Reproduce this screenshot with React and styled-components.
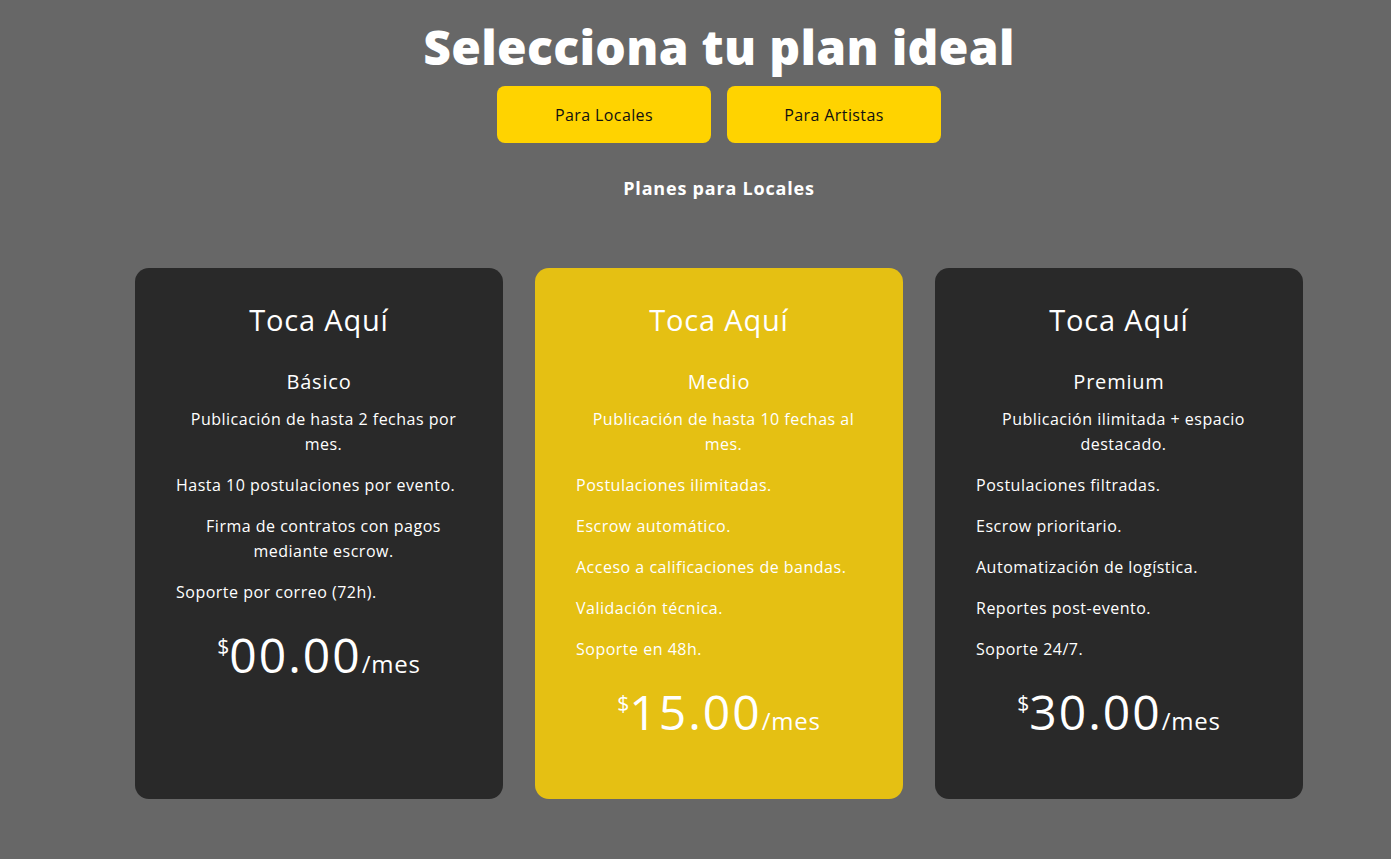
import styled, { createGlobalStyle } from 'styled-components';

const GlobalStyle = createGlobalStyle`
  * {
    box-sizing: border-box;
  }
  body {
    margin: 0;
    background-color: #676767;
    font-family: 'Open Sans', 'DejaVu Sans', sans-serif;
  }
`;

const Page = styled.main`
  min-height: 100vh;
  padding-left: 47px;
  display: flex;
  flex-direction: column;
  align-items: center;
  color: #fff;
`;

const Title = styled.h1`
  margin: 11px 0 0;
  font-size: 48px;
  font-weight: 800;
  line-height: 72px;
  letter-spacing: 0.3px;
`;

const Switcher = styled.div`
  display: flex;
  gap: 16px;
  margin-top: 3px;
`;

const TabButton = styled.button`
  width: 214px;
  height: 57px;
  border: none;
  border-radius: 8px;
  background-color: #ffd300;
  color: #111;
  font-family: inherit;
  font-size: 16px;
  letter-spacing: 0.4px;
  cursor: pointer;
`;

const Subtitle = styled.h2`
  margin: 32px 0 0;
  font-size: 18px;
  font-weight: 700;
  line-height: 27px;
  letter-spacing: 0.8px;
`;

const Cards = styled.div`
  display: grid;
  grid-template-columns: repeat(3, 368px);
  gap: 32px;
  margin-top: 66px;
`;

const Card = styled.section`
  background-color: ${({ $featured }) => ($featured ? '#e5c013' : '#292929')};
  border-radius: 14px;
  padding: 30px 0 51px;
  display: flex;
  flex-direction: column;
  align-items: center;
`;

const CardTitle = styled.h3`
  margin: 0;
  font-size: 29px;
  font-weight: 500;
  line-height: 44px;
  letter-spacing: 0.8px;
`;

const PlanName = styled.h4`
  margin: 25px 0 0;
  font-size: 20px;
  font-weight: 400;
  line-height: 30px;
  letter-spacing: 0.8px;
`;

const Features = styled.ul`
  list-style: none;
  align-self: stretch;
  margin: 10px 32px 0 41px;
  padding: 0;
  display: flex;
  flex-direction: column;
  align-items: flex-start;
  gap: 16px;
`;

const Feature = styled.li`
  font-size: 16px;
  line-height: 25px;
  letter-spacing: 0.5px;
  text-align: center;
`;

const Price = styled.div`
  margin-top: 14px;
  line-height: 72px;
  font-size: 48px;
  letter-spacing: 2px;
`;

const Currency = styled.span`
  position: relative;
  top: -19px;
  font-size: 21px;
  line-height: 1;
  letter-spacing: 0;
`;

const Period = styled.span`
  font-size: 24px;
  line-height: 1;
  letter-spacing: 0.8px;
`;

const plans = [
  {
    name: 'Básico',
    price: '00.00',
    features: [
      'Publicación de hasta 2 fechas por mes.',
      'Hasta 10 postulaciones por evento.',
      'Firma de contratos con pagos mediante escrow.',
      'Soporte por correo (72h).',
    ],
  },
  {
    name: 'Medio',
    price: '15.00',
    featured: true,
    features: [
      'Publicación de hasta 10 fechas al mes.',
      'Postulaciones ilimitadas.',
      'Escrow automático.',
      'Acceso a calificaciones de bandas.',
      'Validación técnica.',
      'Soporte en 48h.',
    ],
  },
  {
    name: 'Premium',
    price: '30.00',
    features: [
      'Publicación ilimitada + espacio destacado.',
      'Postulaciones filtradas.',
      'Escrow prioritario.',
      'Automatización de logística.',
      'Reportes post-evento.',
      'Soporte 24/7.',
    ],
  },
];

function App() {
  return (
    <>
      <GlobalStyle />
      <Page>
        <Title>Selecciona tu plan ideal</Title>
        <Switcher>
          <TabButton>Para Locales</TabButton>
          <TabButton>Para Artistas</TabButton>
        </Switcher>
        <Subtitle>Planes para Locales</Subtitle>
        <Cards>
          {plans.map((plan) => (
            <Card key={plan.name} $featured={plan.featured}>
              <CardTitle>Toca Aquí</CardTitle>
              <PlanName>{plan.name}</PlanName>
              <Features>
                {plan.features.map((f) => (
                  <Feature key={f}>{f}</Feature>
                ))}
              </Features>
              <Price>
                <Currency>$</Currency>
                {plan.price}
                <Period>/mes</Period>
              </Price>
            </Card>
          ))}
        </Cards>
      </Page>
    </>
  );
}

export default App;
